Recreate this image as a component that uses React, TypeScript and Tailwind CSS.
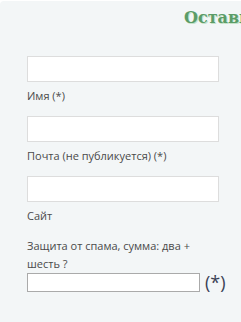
const inputCls = "block w-[192px] h-[26px] bg-white border border-[#dddddd]";
const labelCls = "block mt-[6px] text-[11px] leading-[16px] text-[#4a4a4a]";

export default function App() {
  return (
    <div className="w-[241px] h-[322px] bg-white overflow-hidden font-['Open_Sans',sans-serif]">
      <div className="mt-px h-[321px] rounded-tl-[4px] bg-[#f3f6f7] overflow-hidden">
        <div className="pl-[184px] pt-[7px] whitespace-nowrap font-['DejaVu_Serif',serif] font-bold text-[16px] leading-[20px] text-[#5b9c68] [text-shadow:1px_1px_0_#c5e3c9]">
          Оставить комментарий
        </div>

        <form className="pl-[27px] pt-[28px]">
          <input className={inputCls} type="text" />
          <label className={labelCls}>Имя (*)</label>

          <input className={inputCls + " mt-[12px]"} type="text" />
          <label className={labelCls}>Почта (не публикуется) (*)</label>

          <input className={inputCls + " mt-[12px]"} type="text" />
          <label className={labelCls}>Сайт</label>

          <p className="mt-[13px] w-[180px] text-[11px] leading-[18px] text-[#4a4a4a]">
            Защита от спама, сумма: два + шесть ?
          </p>
          <div className="flex items-center gap-[5px] -mt-px">
            <input className="block w-[173px] h-[19px] bg-white border border-[#aaaaaa]" type="text" />
            <span className="text-[18px] leading-[20px] text-[#3a3f55]">(*)</span>
          </div>
        </form>
      </div>
    </div>
  );
}
